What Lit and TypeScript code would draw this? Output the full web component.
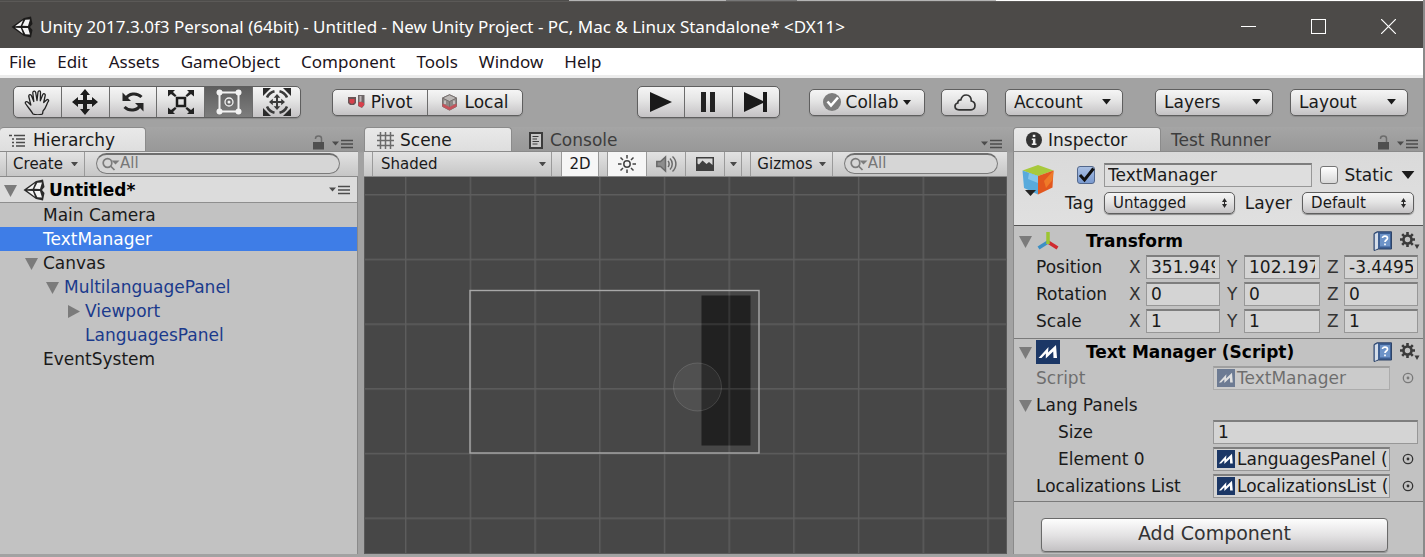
import { LitElement, html, css, svg, nothing } from "lit";
import { customElement } from "lit/decorators.js";
import { classMap } from "lit/directives/class-map.js";

type Node = { name: string; depth: number; fold?: "open" | "closed"; prefab?: boolean; selected?: boolean };

const MENUS = ["File", "Edit", "Assets", "GameObject", "Component", "Tools", "Window", "Help"];

const NODES: Node[] = [
  { name: "Main Camera", depth: 1 },
  { name: "TextManager", depth: 1, selected: true },
  { name: "Canvas", depth: 1, fold: "open" },
  { name: "MultilanguagePanel", depth: 2, fold: "open", prefab: true },
  { name: "Viewport", depth: 3, fold: "closed", prefab: true },
  { name: "LanguagesPanel", depth: 3, prefab: true },
  { name: "EventSystem", depth: 1 },
];

const VECTORS = [
  { label: "Position", values: ["351.949", "102.197", "-3.4495"] },
  { label: "Rotation", values: ["0", "0", "0"] },
  { label: "Scale", values: ["1", "1", "1"] },
];

/* ---------- icons ---------- */

const unityMark = (w: number, h: number, light = false) => html`<svg width=${w} height=${h} viewBox="0 0 22 22" aria-hidden="true">
  <path d="M.5 11 13 2 20 .5 21.500 8 19 11 21.500 14 20 21.500 13 20Z" fill=${light ? "#1c1b1a" : "#2a2a2a"}/>
  <path d="M4 10.300 12 4.300 9.800 9.800ZM4 11.800 9.800 12 12 17.700ZM11.300 9.700 14.300 3.800 19 3.500 17 9.900ZM11.300 12 17 12 19 18.500 14.300 18.200Z" fill="#f4f4f4"/>
</svg>`;

const handIcon = html`<svg width="26" height="26" viewBox="0 0 26 26" fill="none" stroke="#222" stroke-width="1.300" stroke-linejoin="round" stroke-linecap="round">
  <path d="M9 25C7.500 22 4 18.500 1.500 14.500 .8 12.800 2.500 12 4 13.200L6.800 16 4.800 7.500C4.500 5.500 6.800 5 7.500 6.800L9.800 12.500 8.800 3.800C8.800 1.800 11.200 1.500 11.700 3.500L13 11.500 14 3.200C14.300 1.300 16.700 1.500 16.500 3.500L16.300 11.800 18.800 5.500C19.700 4 21.600 4.800 21.200 6.500L19.700 13.500 22.800 10.700C24 10 25.200 11.200 24.200 12.500 22.500 15 22.300 19 19 22L18.500 25C15.500 26 12 26 9 25Z"/>
</svg>`;

const moveIcon = html`<svg width="26" height="26" viewBox="0 0 26 26" fill="#1c1c1c">
  <path d="M13 0 18 6H15V11H20V8L26 13 20 18V15H15V20H18L13 26 8 20H11V15H6V18L0 13 6 8V11H11V6H8Z"/>
</svg>`;

const rotateIcon = html`<svg width="24" height="24" viewBox="0 0 24 24" fill="none" stroke="#262626" stroke-width="3">
  <path d="M5 8.500C7.500 3.500 15.500 2 20.500 7"/><path d="M1.500 2.500V11H10Z" fill="#262626" stroke="none"/>
  <path d="M19 15.500C16.500 20.500 8.500 22 3.500 17"/><path d="M22.500 21.500V13H14Z" fill="#262626" stroke="none"/>
</svg>`;

const scaleIcon = html`<svg width="26" height="24" viewBox="0 0 26 24">
  <rect x="9" y="8" width="8" height="8" fill="none" stroke="#1c1c1c" stroke-width="2.500"/>
  <path d="M0 0H7L5 2 8.500 5.500 7 7 3 4 0 6.500ZM26 0H19L21 2 17.500 5.500 19 7 23 4 26 6.500ZM0 24H7L5 22 8.500 18.500 7 17 3 20 0 17.500ZM26 24H19L21 22 17.500 18.500 19 17 23 20 26 17.500Z" fill="#222"/>
</svg>`;

const rectIcon = html`<svg width="26" height="26" viewBox="0 0 26 26" fill="none" stroke="#f2f2f2">
  <rect x="3.500" y="3.500" width="19" height="19" stroke-width="2"/>
  <g fill="#f2f2f2" stroke="none"><circle cx="3.500" cy="3.500" r="3"/><circle cx="22.500" cy="3.500" r="3"/><circle cx="3.500" cy="22.500" r="3"/><circle cx="22.500" cy="22.500" r="3"/><circle cx="13" cy="13" r="1.500"/></g>
  <circle cx="13" cy="13" r="4" stroke-width="1.300"/>
</svg>`;

const transformToolIcon = html`<svg width="28" height="28" viewBox="0 0 28 28" fill="none" stroke="#3a3a3a">
  <path d="M0 0H8L0 8ZM28 0H20L28 8ZM0 28H8L0 20ZM28 28H20L28 20Z" fill="#2b2b2b" stroke="none"/>
  <path d="M4 9.500A11 11 0 0 1 11.500 3.200M16.500 3.200A11 11 0 0 1 24 9.500M4 18.500A11 11 0 0 0 11.500 24.800M16.500 24.800A11 11 0 0 0 24 18.500" stroke-width="2.600"/>
  <path d="M14 6 17.300 9.800H15V13H18.200V10.700L22 14 18.200 17.300V15H15V18.200H17.300L14 22 10.700 18.200H13V15H9.800V17.300L6 14 9.800 10.700V13H13V9.800H10.700Z" fill="#3a3a3a" stroke="none"/>
</svg>`;

const pivotIcon = html`<svg width="17" height="14" viewBox="0 0 17 14">
  <path d="M0 2H8V8L6 10H2L0 8Z" fill="#6a5556"/><path d="M1.500 4H6.500V7.500L4 9 1.500 7.500Z" fill="#d8404c"/>
  <path d="M10 0H16.500V10L14 13 10 11Z" fill="#6e6768"/><path d="M10.500 7.500 12.500 6.500 16 8V10L13.500 12.500 10.500 11Z" fill="#d8404c"/><path d="M11.500 1H13.500V6.500L11.500 7Z" fill="#bdb6b7"/>
</svg>`;

const localIcon = html`<svg width="17" height="17" viewBox="0 0 17 17" stroke="#77706f">
  <path d="M8.500 .8 15.500 4V12.500L8.500 16.200 1.500 12.500V4Z" fill="#8d8886"/>
  <path d="M1.500 9.500 8.500 13 15.500 9.500V12.500L8.500 16.200 1.500 12.500Z" fill="#c5525a" stroke="none"/>
  <path d="M8.500 .8 15.500 4 8.500 7.500 1.500 4Z" fill="#bcb8b6"/><path d="M8.500 7.500V13" fill="none"/><path d="M4 6.500V10M13 6.500V10" stroke="#d4d0ce" stroke-width="1.500"/>
</svg>`;

const playIcon = html`<svg width="22" height="20" viewBox="0 0 22 20"><path d="M0 0 22 10 0 20Z" fill="#1a1a1a"/></svg>`;
const pauseIcon = html`<svg width="14" height="20" viewBox="0 0 14 20"><path d="M0 0H5V20H0ZM9 0H14V20H9Z" fill="#222"/></svg>`;
const stepIcon = html`<svg width="24" height="20" viewBox="0 0 24 20"><path d="M0 0 19 9V0H23V20H19V11L0 20Z" fill="#1a1a1a"/></svg>`;

const checkBadge = html`<svg width="18" height="18" viewBox="0 0 18 18"><circle cx="9" cy="9" r="9" fill="#7d7d7d"/><path d="M4.500 8.500 8 12.500 15 4.500" fill="none" stroke="#fff" stroke-width="2.600"/></svg>`;
const cloudIcon = html`<svg width="22" height="17" viewBox="0 0 22 17" fill="none" stroke="#333" stroke-width="1.700"><path d="M5 15.800C2.500 15.800 1 14.300 1 12.300 1 10.500 2.300 9.300 3.800 9 3.800 7 5 5.800 6.800 5.900 7.500 2.800 9.500 1 12.200 1 15.500 1 17.500 3.500 17.300 7 19.500 7.500 21 9.200 21 11.500 21 14 19.200 15.800 17 15.800Z"/></svg>`;

const caret = (w = 8, cls = "") => html`<svg class=${"caret " + cls} width=${w} height=${w / 2 + 1} viewBox="0 0 8 5" aria-hidden="true"><path d="M0 0H8L4 5Z" fill="currentColor"/></svg>`;
const upDown = html`<svg class="caret" width="7" height="12" viewBox="0 0 7 12" aria-hidden="true"><path d="M1 5 3.500 1 6 5ZM1 7H6L3.500 11ZM3 4H4V8H3Z" fill="#2a2a2a"/></svg>`;
const foldIcon = (closed = false) => html`<svg width="13" height="13" viewBox="0 0 13 13" aria-hidden="true"><path d=${closed ? "M1 0V13L13 6.500Z" : "M0 1H13L6.500 13Z"} fill="#7b7b7b"/></svg>`;

const lockIcon = html`<svg width="12" height="15" viewBox="0 0 12 15"><path d="M3.500 4V3.500C3.500 .3 9.500 .3 9.500 3.500V7" fill="none" stroke="#6c6c6c" stroke-width="1.500"/><rect x="1" y="7" width="11" height="7.500" fill="#4f4f4f"/></svg>`;
const paneMenuIcon = html`<svg width="21" height="10" viewBox="0 0 21 10"><path d="M0 2.500H7L3.500 6.500Z" fill="#4c4c4c"/><path d="M9 1.500H21M9 5H21M9 8.500H21" stroke="#4c4c4c" stroke-width="1.500"/></svg>`;

const listIcon = html`<svg width="17" height="13" viewBox="0 0 17 13" stroke="#4a4a4a" stroke-width="1.500"><path d="M0 1.500H3M5 1.500H16M3 5H5M7 5H16M3 8.500H5M7 8.500H16M3 12H5M7 12H16"/></svg>`;
const hashIcon = html`<svg width="17" height="17" viewBox="0 0 17 17" stroke="#6b6b6b" stroke-width="1.500"><path d="M3.500 0V17M8.500 0V17M13.500 0V17M0 3.500H17M0 8.500H17M0 13.500H17"/></svg>`;
const consoleIcon = html`<svg width="14" height="17" viewBox="0 0 14 17" fill="none" stroke="#3c3c3c"><rect x="1" y="1" width="12" height="15" fill="#c8c8c8" stroke-width="2"/><path d="M3.500 4.500H9.500M3.500 7H8M3.500 9.500H10M3.500 12H8.500" stroke-width="1.200"/></svg>`;
const infoIcon = html`<svg width="16" height="16" viewBox="0 0 16 16"><circle cx="8" cy="8" r="8" fill="#333"/><path d="M6.800 2.800H9.300V5H6.800ZM5.800 6.500H9.400V11.500H10.500V13H5.800V11.500H6.900V8H5.800Z" fill="#eee"/></svg>`;
const searchIcon = html`<svg class="glass" width="18" height="14" viewBox="0 0 18 14" fill="none" stroke="#7c7c7c" stroke-width="1.700" aria-hidden="true"><circle cx="5.500" cy="6" r="4.300"/><path d="M8.500 9 12.500 13"/><path d="M9.500 3.500H17.500L13.500 7.500Z" fill="#7c7c7c" stroke="none"/></svg>`;

const sunIcon = html`<svg width="18" height="18" viewBox="0 0 18 18" fill="none" stroke="#444" stroke-width="1.500"><circle cx="9" cy="9" r="3.200"/><path d="M9 0V3.500M9 14.500V18M0 9H3.500M14.500 9H18M2.500 2.500 5 5M13 13 15.500 15.500M15.500 2.500 13 5M5 13 2.500 15.500"/></svg>`;
const soundIcon = html`<svg width="21" height="18" viewBox="0 0 21 18" fill="none" stroke="#6a6a6a" stroke-width="1.500"><path d="M.8 6.500H4.500L9.500 2V16L4.500 11.500H.8Z" fill="#8d8d8d"/><path d="M12 6C13.500 7.500 13.500 10.500 12 12M14 3.500C17 6.500 17 11.500 14 14.500M16.500 1.500C21 5.500 21 12.500 16.500 16.500"/></svg>`;
const imageIcon = html`<svg width="18" height="14" viewBox="0 0 18 14"><rect width="18" height="14" fill="#3f3f3f"/><path d="M1.500 1.500H16.500V8L13 5 10.500 7 6.500 3.500 3 7.500 1.500 6.500Z" fill="#d9d9d9"/></svg>`;

const cubeIcon = html`<svg width="34" height="34" viewBox="0 0 34 34">
  <path d="M1.500 7.500 17 2 32.500 7.500 17 13Z" fill="#a8c93c"/><path d="M1.500 7.500 17 13V31.500L3 25Z" fill="#58aadc"/><path d="M17 13 32.500 7.500 31.500 24.500 17 31.500Z" fill="#e2571e"/><path d="M23 18 32.500 7.500 31.500 17 25 25Z" fill="#ef7a28"/><path d="M8 10 17 13V20L7 16Z" fill="#84c5ea"/>
  <path d="M4 27H15L9.500 33Z" fill="#252525"/>
</svg>`;
const axesIcon = html`<svg width="24" height="18" viewBox="0 0 24 18" stroke-width="3.500" fill="none"><path d="M12 10 2.500 16" stroke="#3d8fc4"/><path d="M12 10 21.500 16" stroke="#d02a2f"/><path d="M12 12V0" stroke="#9cc531"/></svg>`;
const scriptIcon = (size: number) => html`<svg width=${size} height=${size} viewBox="0 0 24 24" aria-hidden="true"><rect width="24" height="24" fill="#1b3766"/><path d="M2.500 18 12.500 7 12 12.500 20 5 21 18H17.500L17.200 11.500 9.800 18.500 9.800 13.500 5.500 18Z" fill="#fff"/></svg>`;
const bookIcon = html`<svg width="20" height="20" viewBox="0 0 20 20"><path d="M1 2.500 4 .8H18.500V18H5.500L1 19.500Z" fill="#3d5f93" stroke="#2e4468"/><path d="M1.800 3 5 1.500V17.500L1.800 19Z" fill="#d5dde8"/><path d="M7 3H17V15.500H7Z" fill="#6d93c8"/><path d="M9.500 7C9.500 4.500 14.500 4.500 14.500 7.200 14.500 9 12 9 12 11M12 12.500V14.300" stroke="#fff" stroke-width="1.700" fill="none"/></svg>`;
const gearIcon = html`<svg width="20" height="18" viewBox="0 0 20 18"><circle cx="7.500" cy="7.500" r="4" fill="none" stroke="#3b3b3b" stroke-width="2.600"/><g stroke="#3b3b3b" stroke-width="2.600"><path d="M7.500 0V3M7.500 12V15M0 7.500H3M12 7.500H15M2.200 2.200 4.300 4.300M10.700 10.700 12.800 12.800M12.800 2.200 10.700 4.300M4.300 10.700 2.200 12.800"/></g><path d="M14.500 12.500H19.500L17 17Z" fill="#3b3b3b"/></svg>`;
const targetIcon = html`<svg width="12" height="12" viewBox="0 0 12 12"><circle cx="6" cy="6" r="4.700" fill="none" stroke="#333" stroke-width="1.300"/><circle cx="6" cy="6" r="1.400" fill="#333"/></svg>`;

@customElement("app-root")
export class AppRoot extends LitElement {
  static styles = css`
    :host { display: block; font: 17px/24px "DejaVu Sans", Verdana, sans-serif; color: #1a1a1a; }
    * { box-sizing: border-box; }
    svg { display: block; flex: none; }
    button, select, input { font: inherit; color: inherit; margin: 0; border-radius: 0; }
    button { background: none; border: 0; padding: 0; display: flex; align-items: center; justify-content: center; white-space: nowrap; }
    ul { list-style: none; margin: 0; padding: 0; }
    .window { display: flex; flex-direction: column; min-height: 100vh; background: #a2a2a2; border-right: 2px solid #8a8a8a; overflow: hidden; }
    .behind { height: 1px; background: linear-gradient(90deg, #4e4d4b 40%, #b4b4b4 40% 51%, #777 51% 56%, #b4b4b4 56% 70%, #fff 70%); }

    .titlebar { height: 47px; background: #4c4a48; border-top: 1px solid #5b5957; display: flex; align-items: center; padding: 3px 0 0 11px; gap: 7px; color: #fff; font: 17px/24px "Noto Sans", "Segoe UI", sans-serif; }
    .titlebar h1 { font: inherit; margin: 0; flex: 1; white-space: nowrap; }
    .winbtns { display: flex; }
    .winbtns button { width: 70px; height: 42px; }

    .menubar { height: 30px; background: #fff; border-bottom: 3px solid #ececec; display: flex; align-items: center; gap: 21px; padding-left: 9px; padding-top: 1px; color: #1c1420; font: 17px/24px "Noto Sans", "Segoe UI", sans-serif; }

    .toolbar { height: 49px; display: flex; align-items: center; padding: 0 15px 1px 13px; }
    .group { display: flex; border: 1px solid #5f5f5f; border-radius: 5px; overflow: hidden; background: linear-gradient(#f5f5f5, #e4e4e4 45%, #c4c2c4); box-shadow: 0 1px 1px #8a8a8a; }
    .group button { flex: 1; }
    .group button + button { border-left: 1px solid #6c6c6c; }
    .tools { width: 288px; height: 32px; }
    .play { width: 143px; height: 32px; }
    .pivots { width: 191px; height: 27px; margin-left: 31px; }
    .pivots button { gap: 6px; }
    .on { background: linear-gradient(#5e5e5e, #7d7d7d); }
    .collab { width: 116px; height: 27px; }
    .collab button { gap: 5px; }
    .cloud { width: 47px; height: 27px; margin-left: 16px; }
    .account, .layout { margin-left: 17px; }
    .layers { margin-left: 32px; }
    .leftside { display: flex; flex: 624 1 0; align-items: center; }
    .rightside { display: flex; flex: 628 1 0; align-items: center; justify-content: flex-end; }

    .pick { display: grid; align-items: center; }
    .pick > * { grid-area: 1 / 1; }
    .pick select { appearance: none; border: 0; background: none; width: 100%; height: 100%; padding: 0 8px; outline: none; }
    .pick .caret { justify-self: end; margin-right: 11px; pointer-events: none; }
    .wide { width: 118px; height: 27px; }

    .panes { flex: 1; display: grid; grid-template-columns: minmax(260px, 358fr) minmax(400px, 643fr) minmax(380px, 410fr); gap: 6px; padding-bottom: 3px; background: linear-gradient(#a5a5a5, #989898 24px, #a2a2a2 26px); }
    .pane { display: flex; flex-direction: column; min-width: 0; }
    .tabs { height: 24px; display: flex; align-items: stretch; }
    .tabs button { justify-content: flex-start; gap: 6px; color: #3d3d3d; padding: 2px 10px 0; }
    .tabs .active { color: #1a1a1a; background: linear-gradient(#e9e9e9, #dedede); border: 1px solid #8b8b8b; border-bottom: 0; border-radius: 4px 4px 0 0; width: 148px; padding: 1px 12px 0; }
    .tabs.tree .active { width: 146px; padding-left: 9px; gap: 7px; border-left: 0; }
    .tabs .console { padding-left: 17px; gap: 7px; }
    .tabs .aux { padding: 6px 5px 0 0; margin-left: auto; display: flex; align-items: center; gap: 8px; }
    .tabs .aux button { padding: 0; }
    .tabs .aux button:last-child { padding-top: 4px; }

    .strip { height: 26px; display: flex; align-items: stretch; background: linear-gradient(#e2e2e2, #c6c6c6); border: solid #8a8a8a; border-width: 1px 0; font-size: 15px; line-height: 24px; }
    .strip button { border-left: 1px solid #9a9a9a; }
    .strip .caret { color: #4a4a4a; }
    .strip .lit { background: #f6f6f6; border-right: 1px solid #9a9a9a; }
    .strip .create { width: 79px; gap: 8px; margin-left: 6px; border-right: 1px solid #9a9a9a; }
    .search { flex: 1; display: grid; align-items: center; margin: 1px 18px 2px 11px; }
    .search > * { grid-area: 1 / 1; }
    .search input { width: 100%; height: 21px; min-width: 0; border: 1px solid #7b7b7b; border-top: 2px solid #6e6e6e; border-radius: 11px; background: #d6d6d6; padding: 0 8px 2px 23px; font-size: 15px; line-height: 18px; outline: none; }
    .search input::placeholder { color: #777; opacity: 1; }
    .search .glass { margin-left: 6px; pointer-events: none; }
    .search.narrow { flex: 0 1 155px; margin-right: 9px; }

    .hier { background: #c2c2c2; flex: 1; border-right: 1px solid #8a8a8a; }
    .sceneroot { height: 26px; background: #dcdcdc; border-bottom: 1px solid #8e8e8e; display: flex; align-items: center; padding: 1px 7px 0 4px; font-weight: 700; color: #000; }
    .sceneroot button:last-child { margin-left: auto; }
    .mark { margin: 0 4px 0 6px; }
    .node { height: 24px; display: flex; align-items: center; gap: 5px; }
    .d1 { padding-left: 25px; } .d2 { padding-left: 46px; } .d3 { padding-left: 67px; }
    .fold { width: 13px; height: 24px; }
    .prefab { color: #1b3a8c; }
    .selected { background: #3e7de7; color: #fff; }

    .scene { flex: 1; background: #474747; border: 1px solid #5a5a5a; border-top: 0; min-height: 0; overflow: hidden; display: grid; }
    .scene svg { width: 100%; height: 100%; }
    .shaded { width: 181px; margin-left: 8px; border: solid #9a9a9a; border-width: 0 1px; }
    .strip .pick .caret { margin-right: 5px; }
    .two { width: 38px; margin-left: 9px; }
    .light { width: 40px; margin-left: 8px; }
    .strip .sound { width: 39px; border-left: 0; }
    .fx { width: 39px; }
    .strip .fxmore { width: 18px; border-right: 1px solid #9a9a9a; }
    .strip .gizmos { width: 83px; gap: 6px; margin-left: 8px; border-right: 1px solid #9a9a9a; }

    .insp { background: #c2c2c2; flex: 1; border-left: 1px solid #8a8a8a; }
    .object { background: linear-gradient(#dadada, #e0e0e0); border-bottom: 1px solid #555; height: 74px; display: grid; grid-template-columns: 34px 1fr; column-gap: 10px; padding: 11px 9px 0 7px; }
    .panebar { height: 1px; background: #8a8a8a; }
    .lines { display: flex; flex-direction: column; gap: 6px; min-width: 0; }
    .line { display: flex; align-items: center; height: 24px; }
    .field { border: 1px solid #979797; border-top: 2px solid #7e7e7e; background: #d4d4d4; height: 24px; padding: 0 4px 2px; outline: none; min-width: 0; width: 100%; line-height: 20px; }
    .object .field { background: #dedede; padding-left: 3px; flex: 1; }
    .check { display: grid; place-items: center; }
    .check > * { grid-area: 1 / 1; }
    .check input { appearance: none; width: 18px; height: 18px; border: 1px solid #757575; border-radius: 3px; background: linear-gradient(#fff, #d8d8d8); }
    .check input:checked { background: linear-gradient(#a9bfe2, #7b9bd0); border-color: #52678c; }
    .check svg { pointer-events: none; z-index: 1; }
    .line .first { margin: 0 9px 0 12px; }
    .line .second { margin: 0 6px 0 8px; }
    .static { display: flex; gap: 8px; margin-right: -1px; }
    .line .group { height: 22px; font-size: 15px; line-height: 20px; }
    .line .pick .caret { margin-right: 6px; }
    .lower { height: 20px; }
    .taglabel { width: 39px; }
    .layerlabel { padding: 0 10px; }
    .tag { flex: 130; } .layer { flex: 111; }

    .component { border-bottom: 1px solid #7a7a7a; padding: 3px 5px 5px 5px; }
    .component header { height: 24px; display: flex; align-items: center; margin-bottom: 2px; }
    .component h2 { font-size: 17px; line-height: 24px; margin: 0; flex: 1; color: #000; padding-left: 26px; white-space: nowrap; }
    .component header > svg { margin-left: 4px; }
    .component header button + button { margin-left: 7px; margin-right: -2px; }
    .rows { display: flex; flex-direction: column; gap: 3px; }
    .vector { display: grid; grid-template-columns: 93px 17px 74fr 7px 17px 76fr 7px 17px 74fr; align-items: center; padding-left: 17px; height: 24px; }
    .axis { color: #333; }
    .row { display: grid; grid-template-columns: 194px 1fr; align-items: center; height: 24px; }
    .row label { padding-left: 17px; white-space: nowrap; }
    .row .deep { padding-left: 39px; }
    .foldrow { display: flex; gap: 4px; align-items: center; height: 24px; }
    .ref { display: grid; grid-template-columns: 1fr 28px; align-items: center; }
    .slot { display: flex; align-items: center; width: 100%; justify-content: flex-start; overflow: hidden; padding: 0 3px 1px; gap: 2px; }
    .slot span { white-space: nowrap; }
    .ref .target { justify-self: end; margin-right: 4px; }
    .dim { opacity: .5; }
    .script { padding-top: 1px; padding-bottom: 3px; }
    .add { margin: 16px auto 0 27px; width: calc(100% - 62px); height: 34px; border: 1px solid #6a6a6a; border-radius: 4px; background: linear-gradient(#fdfdfd, #e4e3e4 50%, #c3c1c3); box-shadow: 0 1px 1px #909090; font-size: 19px; color: #333; padding-bottom: 4px; }
  `;

  private search(id: string, extra = "") {
    return html`<label class="search ${extra}"><input id=${id} type="text" placeholder="All" aria-label="Search">${searchIcon}</label>`;
  }

  private pick(name: string, value: string, cls: string, arrow: unknown = caret(9)) {
    return html`<div class="pick ${cls}"><select aria-label=${name}><option>${value}</option></select>${arrow}</div>`;
  }

  private reference(id: string, label: string, value: string, opts: { deep?: boolean; dim?: boolean } = {}) {
    return html`<div class=${classMap({ row: true, dim: !!opts.dim })}>
      <label for=${id} class=${opts.deep ? "deep" : ""}>${label}</label>
      <div class="ref"><button id=${id} class="field slot">${scriptIcon(18)}<span>${value}</span></button>
      <button class="target" aria-label="Select object">${targetIcon}</button></div>
    </div>`;
  }

  private componentHeader(title: string, icon: unknown) {
    return html`<header><button class="fold" aria-label="Fold ${title}">${foldIcon()}</button>${icon}<h2>${title}</h2>
      <button aria-label="Help">${bookIcon}</button><button aria-label="Settings">${gearIcon}</button></header>`;
  }

  private renderHierarchy() {
    return html`<section class="pane">
      <div class="tabs tree"><button class="active">${listIcon}Hierarchy</button>
        <div class="aux"><button aria-label="Lock">${lockIcon}</button><button aria-label="Pane menu">${paneMenuIcon}</button></div></div>
      <div class="strip"><button class="create">Create ${caret(7)}</button>${this.search("find-node")}</div>
      <div class="hier">
        <div class="sceneroot"><button class="fold" aria-label="Fold scene">${foldIcon()}</button><span class="mark">${unityMark(22, 22)}</span><span>Untitled*</span><button aria-label="Scene menu">${paneMenuIcon}</button></div>
        <ul>${NODES.map((n) => html`<li class=${classMap({ node: true, ["d" + n.depth]: true, prefab: !!n.prefab, selected: !!n.selected })}>
          ${n.fold ? html`<button class="fold" aria-label="Fold ${n.name}">${foldIcon(n.fold === "closed")}</button>` : html`<span class="fold"></span>`}<span>${n.name}</span></li>`)}</ul>
      </div>
    </section>`;
  }

  private renderScene() {
    return html`<section class="pane">
      <div class="tabs"><button class="active">${hashIcon}Scene</button><button class="console">${consoleIcon}Console</button>
        <div class="aux"><button aria-label="Pane menu">${paneMenuIcon}</button></div></div>
      <div class="strip">
        ${this.pick("Draw mode", "Shaded", "shaded", caret(7))}
        <button class="lit two">2D</button>
        <button class="lit light" aria-label="Lighting">${sunIcon}</button>
        <button class="sound" aria-label="Audio">${soundIcon}</button>
        <button class="fx" aria-label="Effects">${imageIcon}</button>
        <button class="fxmore" aria-label="Effect options">${caret(7)}</button>
        <button class="gizmos">Gizmos ${caret(7)}</button>
        ${this.search("find-scene", "narrow")}
      </div>
      <div class="scene"><svg aria-label="Scene view">
        ${svg`<defs><pattern id="grid" x="40" y="17" width="64.700" height="64.700" patternUnits="userSpaceOnUse"><path d="M.7 0V64.700M0 .7H64.700" stroke="#fff" stroke-opacity=".12" stroke-width="1.400"/></pattern></defs>
        <rect x="336.500" y="118.500" width="49" height="150" fill="#212121"/>
        <rect width="100%" height="100%" fill="url(#grid)"/>
        <circle cx="332.500" cy="210" r="24" fill="#fff" fill-opacity=".05" stroke="#fff" stroke-opacity=".13"/>
        <rect x="105" y="113.500" width="289" height="162.500" fill="none" stroke="#a8a8a8" stroke-width="1.400"/>`}
      </svg></div>
    </section>`;
  }

  private renderInspector() {
    return html`<section class="pane">
      <div class="tabs"><button class="active">${infoIcon}Inspector</button><button>Test Runner</button>
        <div class="aux"><button aria-label="Lock">${lockIcon}</button><button aria-label="Pane menu">${paneMenuIcon}</button></div></div>
      <div class="panebar"></div>
      <div class="insp">
        <div class="object">${cubeIcon}
          <div class="lines">
            <div class="line"><label class="check first"><input type="checkbox" checked aria-label="Active"><svg width="18" height="18" viewBox="0 0 18 18"><path d="M3 9 7.500 14 16.500 2.500" fill="none" stroke="#101010" stroke-width="3"/></svg></label>
              <input class="field" aria-label="Object name" .value=${"TextManager"}>
              <span class="check second"><input id="static" type="checkbox"></span>
              <span class="static"><label for="static">Static</label><button aria-label="Static options">${caret(14)}</button></span></div>
            <div class="line lower"><span class="taglabel">Tag</span>${this.pick("Tag", "Untagged", "group tag", upDown)}
              <span class="layerlabel">Layer</span>${this.pick("Layer", "Default", "group layer", upDown)}</div>
          </div>
        </div>
        <section class="component">${this.componentHeader("Transform", axesIcon)}
          <div class="rows">${VECTORS.map((v) => html`<div class="vector"><span>${v.label}</span>
            ${v.values.map((x, i) => html`${i ? html`<span></span>` : nothing}<label class="axis" for=${v.label + i}>${"XYZ"[i]}</label><input class="field" id=${v.label + i} .value=${x}>`)}</div>`)}</div>
        </section>
        <section class="component script">${this.componentHeader("Text Manager (Script)", scriptIcon(24))}
          <div class="rows">
            ${this.reference("script", "Script", "TextManager", { dim: true })}
            <div class="foldrow"><button class="fold" aria-label="Fold Lang Panels">${foldIcon()}</button><span>Lang Panels</span></div>
            <div class="row"><label for="size" class="deep">Size</label><input id="size" class="field" .value=${"1"}></div>
            ${this.reference("element0", "Element 0", "LanguagesPanel (", { deep: true })}
            ${this.reference("locs", "Localizations List", "LocalizationsList (")}
          </div>
        </section>
        <button class="add">Add Component</button>
      </div>
    </section>`;
  }

  render() {
    return html`<div class="window">
      <div class="behind"></div>
      <div class="titlebar">${unityMark(22, 22, true)}<h1>Unity 2017.3.0f3 Personal (64bit) - Untitled - New Unity Project - PC, Mac &amp; Linux Standalone* &lt;DX11&gt;</h1>
        <div class="winbtns">
          <button aria-label="Minimize"><svg width="15" height="15" viewBox="0 0 15 15"><path d="M0 7.500H15" stroke="#fff"/></svg></button>
          <button aria-label="Maximize"><svg width="15" height="15" viewBox="0 0 15 15"><rect x=".5" y=".5" width="14" height="14" fill="none" stroke="#fff"/></svg></button>
          <button aria-label="Close"><svg width="15" height="15" viewBox="0 0 15 15"><path d="M0 0 15 15M15 0 0 15" stroke="#fff" stroke-width="1.200"/></svg></button>
        </div></div>
      <nav class="menubar">${MENUS.map((m) => html`<button>${m}</button>`)}</nav>
      <div class="toolbar">
        <div class="leftside">
          <div class="group tools"><button aria-label="Hand">${handIcon}</button><button aria-label="Move">${moveIcon}</button><button aria-label="Rotate">${rotateIcon}</button><button aria-label="Scale">${scaleIcon}</button><button class="on" aria-label="Rect">${rectIcon}</button><button aria-label="Transform">${transformToolIcon}</button></div>
          <div class="group pivots"><button>${pivotIcon}Pivot</button><button>${localIcon}Local</button></div>
        </div>
        <div class="group play"><button aria-label="Play">${playIcon}</button><button aria-label="Pause">${pauseIcon}</button><button aria-label="Step">${stepIcon}</button></div>
        <div class="rightside">
          <div class="group collab"><button>${checkBadge}Collab ${caret(8)}</button></div>
          <div class="group cloud"><button aria-label="Services">${cloudIcon}</button></div>
          ${this.pick("Account", "Account", "group wide account")}
          ${this.pick("Layers", "Layers", "group wide layers")}
          ${this.pick("Layout", "Layout", "group wide layout")}
        </div>
      </div>
      <main class="panes">${this.renderHierarchy()}${this.renderScene()}${this.renderInspector()}</main>
    </div>`;
  }
}
